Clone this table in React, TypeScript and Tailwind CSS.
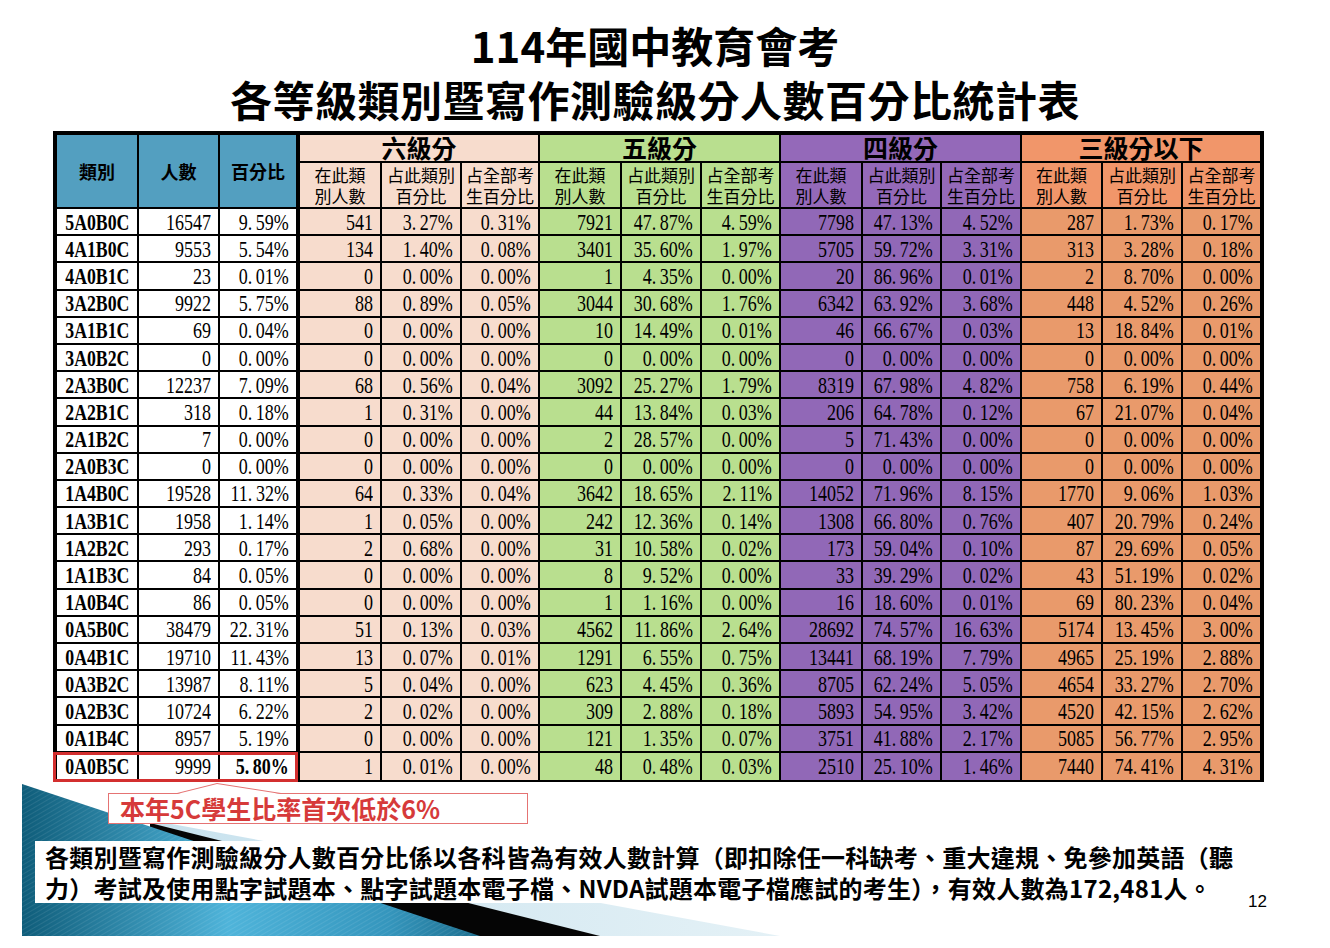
import React from "react";

type Group = {
  title: string;
  head: string;
  cell: string;
};

const groups: Group[] = [
  { title: "六級分", head: "bg-[#f7dccd]", cell: "bg-[#f7dccd]" },
  { title: "五級分", head: "bg-[#b9df8f]", cell: "bg-[#b9df8f]" },
  { title: "四級分", head: "bg-[#9469b9]", cell: "bg-[#9168b7]" },
  { title: "三級分以下", head: "bg-[#f1966a]", cell: "bg-[#e99a6b]" },
];

const subHeads: [string, string][] = [
  ["在此類", "別人數"],
  ["占此類別", "百分比"],
  ["占全部考", "生百分比"],
];

const rows: string[][] = [
  ["5A0B0C", "16547", "9.59%", "541", "3.27%", "0.31%", "7921", "47.87%", "4.59%", "7798", "47.13%", "4.52%", "287", "1.73%", "0.17%"],
  ["4A1B0C", "9553", "5.54%", "134", "1.40%", "0.08%", "3401", "35.60%", "1.97%", "5705", "59.72%", "3.31%", "313", "3.28%", "0.18%"],
  ["4A0B1C", "23", "0.01%", "0", "0.00%", "0.00%", "1", "4.35%", "0.00%", "20", "86.96%", "0.01%", "2", "8.70%", "0.00%"],
  ["3A2B0C", "9922", "5.75%", "88", "0.89%", "0.05%", "3044", "30.68%", "1.76%", "6342", "63.92%", "3.68%", "448", "4.52%", "0.26%"],
  ["3A1B1C", "69", "0.04%", "0", "0.00%", "0.00%", "10", "14.49%", "0.01%", "46", "66.67%", "0.03%", "13", "18.84%", "0.01%"],
  ["3A0B2C", "0", "0.00%", "0", "0.00%", "0.00%", "0", "0.00%", "0.00%", "0", "0.00%", "0.00%", "0", "0.00%", "0.00%"],
  ["2A3B0C", "12237", "7.09%", "68", "0.56%", "0.04%", "3092", "25.27%", "1.79%", "8319", "67.98%", "4.82%", "758", "6.19%", "0.44%"],
  ["2A2B1C", "318", "0.18%", "1", "0.31%", "0.00%", "44", "13.84%", "0.03%", "206", "64.78%", "0.12%", "67", "21.07%", "0.04%"],
  ["2A1B2C", "7", "0.00%", "0", "0.00%", "0.00%", "2", "28.57%", "0.00%", "5", "71.43%", "0.00%", "0", "0.00%", "0.00%"],
  ["2A0B3C", "0", "0.00%", "0", "0.00%", "0.00%", "0", "0.00%", "0.00%", "0", "0.00%", "0.00%", "0", "0.00%", "0.00%"],
  ["1A4B0C", "19528", "11.32%", "64", "0.33%", "0.04%", "3642", "18.65%", "2.11%", "14052", "71.96%", "8.15%", "1770", "9.06%", "1.03%"],
  ["1A3B1C", "1958", "1.14%", "1", "0.05%", "0.00%", "242", "12.36%", "0.14%", "1308", "66.80%", "0.76%", "407", "20.79%", "0.24%"],
  ["1A2B2C", "293", "0.17%", "2", "0.68%", "0.00%", "31", "10.58%", "0.02%", "173", "59.04%", "0.10%", "87", "29.69%", "0.05%"],
  ["1A1B3C", "84", "0.05%", "0", "0.00%", "0.00%", "8", "9.52%", "0.00%", "33", "39.29%", "0.02%", "43", "51.19%", "0.02%"],
  ["1A0B4C", "86", "0.05%", "0", "0.00%", "0.00%", "1", "1.16%", "0.00%", "16", "18.60%", "0.01%", "69", "80.23%", "0.04%"],
  ["0A5B0C", "38479", "22.31%", "51", "0.13%", "0.03%", "4562", "11.86%", "2.64%", "28692", "74.57%", "16.63%", "5174", "13.45%", "3.00%"],
  ["0A4B1C", "19710", "11.43%", "13", "0.07%", "0.01%", "1291", "6.55%", "0.75%", "13441", "68.19%", "7.79%", "4965", "25.19%", "2.88%"],
  ["0A3B2C", "13987", "8.11%", "5", "0.04%", "0.00%", "623", "4.45%", "0.36%", "8705", "62.24%", "5.05%", "4654", "33.27%", "2.70%"],
  ["0A2B3C", "10724", "6.22%", "2", "0.02%", "0.00%", "309", "2.88%", "0.18%", "5893", "54.95%", "3.42%", "4520", "42.15%", "2.62%"],
  ["0A1B4C", "8957", "5.19%", "0", "0.00%", "0.00%", "121", "1.35%", "0.07%", "3751", "41.88%", "2.17%", "5085", "56.77%", "2.95%"],
  ["0A0B5C", "9999", "5.80%", "1", "0.01%", "0.00%", "48", "0.48%", "0.03%", "2510", "25.10%", "1.46%", "7440", "74.41%", "4.31%"],
];

const cjk = "font-['Noto_Sans_CJK_TC','Noto_Sans_CJK_SC',sans-serif]";
const serif = "font-['Liberation_Serif','Noto_Sans_CJK_TC',serif]";

// MingLiU style numbers: tall and narrow, the dot takes extra room
function fmt(value: string): string {
  return value.replace(".", ".\u2009");
}

function BottomDecor() {
  return (
    <svg
      className="pointer-events-none absolute left-0 top-[780px] h-[160px] w-[800px]"
      viewBox="0 780 800 160"
      aria-hidden="true"
    >
      <defs>
        <linearGradient id="teal" x1="0" y1="0" x2="1" y2="0">
          <stop offset="0" stopColor="#0f5d7a" />
          <stop offset="0.45" stopColor="#4fb4da" />
          <stop offset="0.8" stopColor="#3596bd" />
          <stop offset="1" stopColor="#1d6f8f" />
        </linearGradient>
        <linearGradient id="pale" x1="0" y1="0" x2="1" y2="0">
          <stop offset="0" stopColor="#c8e2ee" />
          <stop offset="1" stopColor="#e4f1f6" />
        </linearGradient>
        <pattern id="hatch" width="4" height="4" patternUnits="userSpaceOnUse" patternTransform="rotate(60)">
          <line x1="0" y1="0" x2="0" y2="4" stroke="#ffffff" strokeOpacity="0.14" strokeWidth="1.2" />
        </pattern>
      </defs>
      <polygon points="150,820 780,936 150,936" fill="url(#pale)" />
      <polygon points="150,823 600,936 150,936" fill="#050505" />
      <polygon points="22,784 480,936 22,936" fill="url(#teal)" />
      <polygon points="22,784 480,936 22,936" fill="url(#hatch)" />
    </svg>
  );
}

export default function App() {
  return (
    <div className={`relative h-[948px] w-[1330px] overflow-hidden bg-white text-black ${cjk}`}>
      <BottomDecor />

      <div className="relative z-10 pr-[20px] pt-[18px] text-center font-bold">
        <h1 className="text-[42px] leading-[54px]">114年國中教育會考</h1>
        <h2 className="text-[42px] leading-[54px] tracking-[0.5px]">各等級類別暨寫作測驗級分人數百分比統計表</h2>
      </div>

      <div className="relative z-10 ml-[53px] mt-[5px] w-fit">
        <div className="grid grid-cols-[82px_81px_80px_82px_80px_78px_82px_80px_79px_82px_79px_80px_81px_80px_79px] grid-rows-[28px_46px_repeat(21,27.2px)] border-b-2 border-l-4 border-r-2 border-t-4 border-black">
          <div className="row-span-2 flex items-center justify-center border-b-2 border-r-2 border-black bg-[#539fc0] text-[18px] font-bold">類別</div>
          <div className="row-span-2 flex items-center justify-center border-b-2 border-r-2 border-black bg-[#539fc0] text-[18px] font-bold">人數</div>
          <div className="row-span-2 flex items-center justify-center border-b-2 border-r-4 border-black bg-[#539fc0] text-[18px] font-bold">百分比</div>
          {groups.map((g) => (
            <div
              key={g.title}
              className={`col-span-3 flex items-center justify-center border-b-2 border-r-2 border-black pb-[2px] text-[25px] font-bold leading-none ${g.head}`}
            >
              {g.title}
            </div>
          ))}
          {groups.map((g) =>
            subHeads.map(([a, b]) => (
              <div
                key={g.title + a}
                className={`flex flex-col items-center justify-center border-b-2 border-r-2 border-black text-[17px] leading-[21px] ${g.head}`}
              >
                <span className="block leading-[21px]">{a}</span>
                <span className="block leading-[21px]">{b}</span>
              </div>
            ))
          )}
          {rows.map((row, ri) =>
            row.map((v, ci) => {
              const isLast = ri === rows.length - 1;
              const bg = ci < 3 ? "bg-white" : groups[Math.floor((ci - 3) / 3)].cell;
              const edge = [
                ci === 2 ? "border-r-4" : "border-r-2",
                isLast ? "" : "border-b-2",
              ].join(" ");
              if (ci === 0) {
                return (
                  <div key={ci + "-" + ri} className={`flex items-center justify-center border-black ${edge} ${bg} ${serif}`}>
                    <span className="inline-block origin-center scale-x-[0.74] text-[24px] font-bold leading-none">{v}</span>
                  </div>
                );
              }
              return (
                <div key={ci + "-" + ri} className={`flex items-center justify-end border-black pr-[7px] ${edge} ${bg} ${serif}`}>
                  <span
                    className={`inline-block origin-right scale-x-[0.75] whitespace-pre text-[24px] leading-none ${
                      isLast && ci === 2 ? "font-bold" : ""
                    }`}
                  >
                    {fmt(v)}
                  </span>
                </div>
              );
            })
          )}
        </div>
        <div className="pointer-events-none absolute bottom-0 left-0 h-[30px] w-[245px] border-[3px] border-[#d32f2f]" />
      </div>

      <div className="relative z-10 ml-[108px] mt-[11px] flex h-[31px] w-[420px] items-center border border-[#e57373] bg-white pl-[11px]">
        <svg className="absolute left-[68px] top-[-11px] h-[11px] w-[104px]" viewBox="0 0 104 11" aria-hidden="true">
          <polygon points="0,11 40,0.5 104,11" fill="#ffffff" />
          <polyline points="0,10.5 40,0.5 104,10.5" fill="none" stroke="#e57373" strokeWidth="1" />
        </svg>
        <span className="relative text-[25px] font-bold leading-none text-[#d63a3a]">本年5C學生比率首次低於6%</span>
      </div>

      <div className="relative z-10 mt-[17px] flex items-start">
        <div className="ml-[35px] h-[62px] w-[1205px] whitespace-nowrap bg-white pl-[10px] text-[24px] font-bold leading-[31px] tracking-[0.25px]">
          各類別暨寫作測驗級分人數百分比係以各科皆為有效人數計算（即扣除任一科缺考、重大違規、免參加英語（聽
          <br />
          力）考試及使用點字試題本、點字試題本電子檔、NVDA試題本電子檔應試的考生），有效人數為172,481人。
        </div>
        <div className="ml-[8px] pt-[52px] font-['Liberation_Sans',sans-serif] text-[17px] leading-[18px]">12</div>
      </div>
    </div>
  );
}
